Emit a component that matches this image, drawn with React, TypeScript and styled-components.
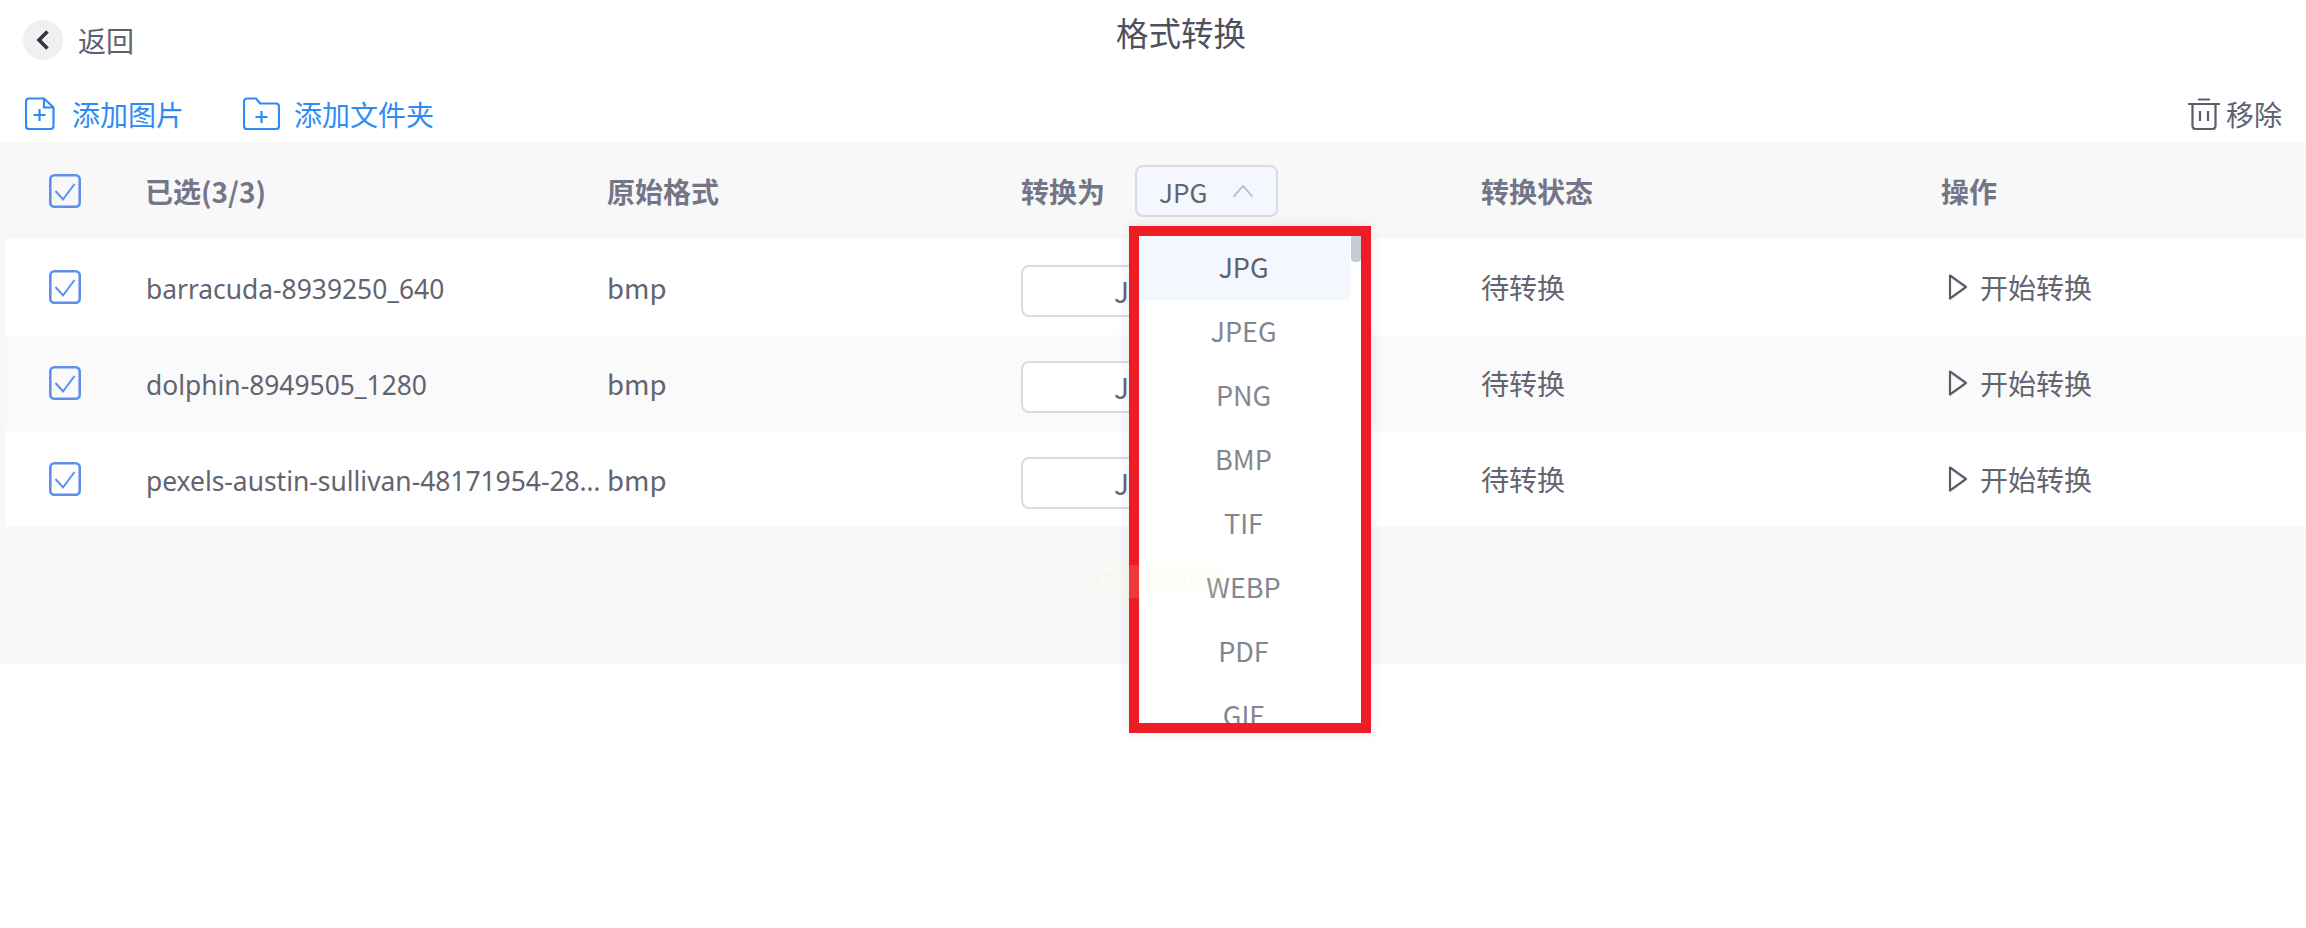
import React from 'react';
import styled, {createGlobalStyle} from 'styled-components';

const GlobalStyle = createGlobalStyle`
    html, body {
        margin: 0;
        padding: 0;
        background: #fff;
        font-family: 'Noto Sans CJK SC', 'Noto Sans', sans-serif;
        color: #5f6170;
    }
`;

const headColumns = '145px 462px 414px 460px 460px 1fr';
// rows start 5px in from the page edge, so the first column gives that back
const rowColumns = '141px 461px 414px 460px 460px 1fr';

const files = [
    {name: 'barracuda-8939250_640', striped: false},
    {name: 'dolphin-8949505_1280', striped: true},
    {name: 'pexels-austin-sullivan-48171954-2800x1800', striped: false},
];

const formats = ['JPG', 'JPEG', 'PNG', 'BMP', 'TIF', 'WEBP', 'PDF', 'GIF'];

const CheckIcon = () => (
    <CheckBox viewBox="0 0 32 34" fill="none">
        <rect x="1.300" y="1.300" width="29.400" height="31.400" rx="4" stroke="#5b8ff0" strokeWidth="2.600" />
        <path d="M6.500 17L14 25.500 25.500 10" stroke="#5b8ff0" strokeWidth="2" />
    </CheckBox>
);

const App: React.FC = () => {
    return (
        <Page>
            <GlobalStyle />
            <TopBar>
                <BackLink>
                    <BackCircle>
                        <svg width="16" height="22" viewBox="0 0 16 22" fill="none">
                            <path d="M12.500 2.500L4 11l8.500 8.500" stroke="#33363f" strokeWidth="3.600" />
                        </svg>
                    </BackCircle>
                    返回
                </BackLink>
                <Title>格式转换</Title>
            </TopBar>

            <Toolbar>
                <ToolButton $gap={17}>
                    <svg width="30" height="34" viewBox="0 0 30 34" fill="none" stroke="#2f8cf5" strokeWidth="2.200">
                        <path d="M4 1.500h15l9.500 9V29a3 3 0 0 1-3 3H4a3 3 0 0 1-3-3V4.500a3 3 0 0 1 3-3z" />
                        <path d="M19 1.500v9h9.500M8.500 18h12M14.500 12v12" />
                    </svg>
                    添加图片
                </ToolButton>
                <ToolButton $gap={14}>
                    <svg width="37" height="34" viewBox="0 0 37 34" fill="none" stroke="#2f8cf5" strokeWidth="2.200">
                        <path d="M4 1.500h9l4 5h16a3 3 0 0 1 3 3V29a3 3 0 0 1-3 3H4a3 3 0 0 1-3-3V4.500a3 3 0 0 1 3-3z" />
                        <path d="M12.500 20h12M18.500 14v12" />
                    </svg>
                    添加文件夹
                </ToolButton>
                <RemoveButton>
                    <svg width="32" height="32" viewBox="0 0 32 32" fill="none" stroke="#5a5d6b" strokeWidth="2.200">
                        <path d="M0 6h32M10 1.500h12M4.500 6v22a3 3 0 0 0 3 3h17a3 3 0 0 0 3-3V6M12 13v10M20 13v10" />
                    </svg>
                    移除
                </RemoveButton>
            </Toolbar>

            <Table>
                <HeaderRow>
                    <HeadCheckCell><CheckIcon /></HeadCheckCell>
                    <Cell>已选(3/3)</Cell>
                    <Cell>原始格式</Cell>
                    <SelectHeadCell>
                        转换为
                        <BulkSelect>
                            JPG
                            <svg width="22" height="14" viewBox="0 0 22 14" fill="none">
                                <path d="M1.500 13L11 2l9.500 11" stroke="#b9bcc6" strokeWidth="1.800" />
                            </svg>
                        </BulkSelect>
                        <Dropdown>
                            {formats.map((format, index) => (
                                <DropdownItem key={format} $active={index === 0}>{format}</DropdownItem>
                            ))}
                            <ScrollThumb />
                        </Dropdown>
                    </SelectHeadCell>
                    <Cell>转换状态</Cell>
                    <Cell>操作</Cell>
                </HeaderRow>

                {files.map((file) => (
                    <FileRow key={file.name} $striped={file.striped}>
                        <RowCheckCell><CheckIcon /></RowCheckCell>
                        <NameCell>{file.name}</NameCell>
                        <FormatCell>bmp</FormatCell>
                        <Cell><RowSelect>JPG</RowSelect></Cell>
                        <Cell>待转换</Cell>
                        <ActionCell>
                            <svg width="20" height="28" viewBox="0 0 20 28" fill="none">
                                <path d="M2 2.500L18 14 2 25.500z" stroke="#5a5d6b" strokeWidth="2.200" strokeLinejoin="round" />
                            </svg>
                            开始转换
                        </ActionCell>
                    </FileRow>
                ))}

                <EmptyBand>
                    <FaintNote>1772158729</FaintNote>
                </EmptyBand>
            </Table>
        </Page>
    );
};

const Page = styled.div`
    width: 2306px;
    height: 928px;
    overflow: hidden;
    background: #fff;
`;

const TopBar = styled.div`
    position: relative;
    display: flex;
    align-items: center;
    height: 80px;
    padding-left: 23px;
    box-sizing: border-box;
`;

const BackLink = styled.div`
    display: flex;
    align-items: center;
    gap: 15px;
    font-size: 28px;
    color: #5f6170;
`;

const BackCircle = styled.div`
    display: flex;
    align-items: center;
    justify-content: center;
    width: 40px;
    height: 40px;
    border-radius: 50%;
    background: #eff0f2;
`;

const Title = styled.div`
    position: absolute;
    left: 1116px;
    top: 9px;
    font-size: 32.500px;
    line-height: 46px;
    color: #4e505e;
`;

const Toolbar = styled.div`
    display: flex;
    align-items: center;
    height: 63px;
    padding: 4px 24px 0 25px;
    box-sizing: border-box;
`;

const ToolButton = styled.div<{$gap: number}>`
    display: flex;
    align-items: center;
    gap: ${({$gap}) => $gap}px;
    margin-right: 59px;
    font-size: 28px;
    color: #2f8cf5;
`;

const RemoveButton = styled.div`
    display: flex;
    align-items: center;
    gap: 6px;
    margin-left: auto;
    font-size: 28px;
    color: #5f6170;
`;

const Table = styled.div`
    background: #f8f8f9;
    font-size: 28px;
`;

const HeaderRow = styled.div`
    display: grid;
    grid-template-columns: ${headColumns};
    align-items: center;
    height: 96px;
    font-weight: 700;
    color: #747687;
`;

const FileRow = styled.div<{$striped: boolean}>`
    display: grid;
    grid-template-columns: ${rowColumns};
    align-items: center;
    height: 96px;
    margin-left: 5px;
    background: ${({$striped}) => ($striped ? '#fafafa' : '#fff')};
    color: #62646f;
`;

const HeadCheckCell = styled.div`
    display: flex;
    padding-left: 49px;
`;

const RowCheckCell = styled.div`
    display: flex;
    padding-left: 44px;
`;

const CheckBox = styled.svg`
    width: 32px;
    height: 34px;
    display: block;
`;

const Cell = styled.div`
    min-width: 0;
    white-space: nowrap;
`;

const NameCell = styled(Cell)`
    overflow: hidden;
    text-overflow: ellipsis;
    padding-top: 4px;
    font-family: 'Noto Sans', sans-serif;
    font-size: 26.400px;
`;

const FormatCell = styled(Cell)`
    font-size: 27.500px;
`;

const SelectHeadCell = styled(Cell)`
    position: relative;
    display: flex;
    align-items: center;
    gap: 30px;
`;

const BulkSelect = styled.div`
    display: flex;
    align-items: center;
    justify-content: space-between;
    width: 143px;
    height: 52px;
    padding: 0 22px 0 22px;
    box-sizing: border-box;
    border: 2px solid #d8dbe2;
    border-radius: 8px;
    background: #f4f7fd;
    font-size: 26px;
    font-weight: 400;
    color: #62646f;
`;

const RowSelect = styled.div`
    display: flex;
    align-items: center;
    justify-content: center;
    width: 238px;
    height: 52px;
    margin-top: 8px;
    box-sizing: border-box;
    border: 2px solid #d8dbe2;
    border-radius: 8px;
    background: #fff;
`;

const Dropdown = styled.div`
    position: absolute;
    left: 108px;
    top: 61px;
    z-index: 2;
    width: 242px;
    height: 507px;
    box-sizing: border-box;
    border: 10px solid #ee1c25;
    background: #fff;
    overflow: hidden;
    box-shadow: 0 0 14px rgba(0, 0, 0, 0.08);
    font-size: 27px;
    font-weight: 400;
`;

const DropdownItem = styled.div<{$active: boolean}>`
    display: flex;
    align-items: center;
    justify-content: center;
    width: 211px;
    height: 64px;
    padding: 0 2px 3px 0;
    box-sizing: border-box;
    background: ${({$active}) => ($active ? '#f4f7fd' : '#fff')};
    color: ${({$active}) => ($active ? '#5f6170' : '#84868f')};
`;

const ScrollThumb = styled.div`
    position: absolute;
    top: 0;
    right: 0;
    width: 10px;
    height: 26px;
    border-radius: 0 0 4px 4px;
    background: #c5cad3;
`;

const ActionCell = styled(Cell)`
    display: flex;
    align-items: center;
    gap: 12px;
    padding-left: 7px;
`;

const EmptyBand = styled.div`
    position: relative;
    height: 137px;
`;

// very faint watermark that sits over the open dropdown too
const FaintNote = styled.div`
    position: absolute;
    left: 1083px;
    top: 38px;
    z-index: 3;
    padding: 0 30px 0 10px;
    font-family: 'Liberation Serif', serif;
    font-size: 20px;
    line-height: 33px;
    background: rgba(255, 255, 210, 0.12);
    color: rgba(130, 130, 90, 0.05);
`;

export default App;
